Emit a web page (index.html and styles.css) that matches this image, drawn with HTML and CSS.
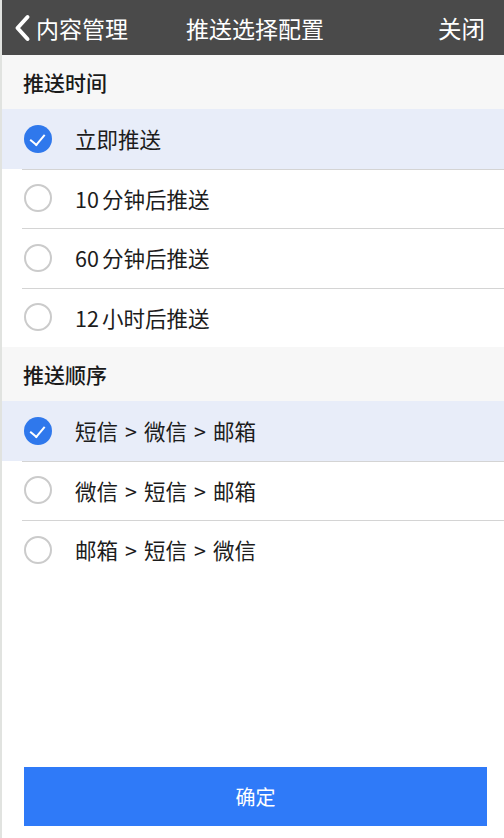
FILE: index.html
```html
<!DOCTYPE html>
<html lang="zh-CN">
<head>
    <meta charset="UTF-8">
    <meta name="viewport" content="width=device-width, initial-scale=1.0">
    <title>推送选择配置</title>
    <link rel="stylesheet" href="styles.css">
</head>
<body>
    <div class="app">
        <header class="topbar">
            <a class="back" href="#">
                <svg class="back-icon" width="18" height="28" viewBox="0 0 18 28">
                    <path d="M14.5 3 L4.5 14 L14.5 25" fill="none" stroke="#fff" stroke-width="4" stroke-linecap="round" stroke-linejoin="round"/>
                </svg>
                <span>内容管理</span>
            </a>
            <h1 class="title">推送选择配置</h1>
            <a class="close" href="#">关闭</a>
        </header>

        <div class="group-title">推送时间</div>
        <ul class="options">
            <li class="option checked"><span class="radio"></span><span class="label">立即推送</span></li>
            <li class="option"><span class="radio"></span><span class="label">10<span class="num-gap"></span>分钟后推送</span></li>
            <li class="option"><span class="radio"></span><span class="label">60<span class="num-gap"></span>分钟后推送</span></li>
            <li class="option"><span class="radio"></span><span class="label">12<span class="num-gap"></span>小时后推送</span></li>
        </ul>

        <div class="group-title">推送顺序</div>
        <ul class="options">
            <li class="option checked"><span class="radio"></span><span class="label">短信<span class="arrow">&gt;</span>微信<span class="arrow">&gt;</span>邮箱</span></li>
            <li class="option"><span class="radio"></span><span class="label">微信<span class="arrow">&gt;</span>短信<span class="arrow">&gt;</span>邮箱</span></li>
            <li class="option"><span class="radio"></span><span class="label">邮箱<span class="arrow">&gt;</span>短信<span class="arrow">&gt;</span>微信</span></li>
        </ul>

        <div class="filler"></div>

        <div class="actions">
            <button class="confirm">确定</button>
        </div>
    </div>
</body>
</html>
```

FILE: styles.css
```css
* {
    margin: 0;
    padding: 0;
    box-sizing: border-box;
}

body {
    background-color: #e1e3e0;
    font-family: "Noto Sans CJK SC", "Noto Sans", sans-serif;
    color: #1c1c1c;
}

ul {
    list-style: none;
}

a {
    text-decoration: none;
    color: #fff;
}

.app {
    margin-left: 2px;
    height: 838px;
    background-color: #fff;
    display: flex;
    flex-direction: column;
}

.topbar {
    height: 55px;
    background-color: #4a4a4a;
    color: #fff;
    display: flex;
    align-items: center;
    justify-content: space-between;
    padding: 0 19px 0 11px;
}

.back {
    display: flex;
    align-items: center;
    gap: 5px;
    font-size: 23px;
    width: 150px;
}

.back-icon {
    display: block;
}

.title {
    font-size: 23px;
    font-weight: normal;
    margin-left: 12px;
}

.close {
    font-size: 23.5px;
    width: 150px;
    text-align: right;
}

.group-title {
    height: 54px;
    line-height: 54px;
    background-color: #f7f7f7;
    padding-left: 21px;
    font-size: 21px;
    font-weight: 500;
    color: #1a1a1a;
}

.option {
    height: 59.5px;
    display: flex;
    align-items: center;
    padding-left: 22px;
    position: relative;
}

.option + .option::before {
    content: "";
    position: absolute;
    left: 20px;
    right: 0;
    top: 0;
    height: 1px;
    background-color: #d4d4d4;
}

.option.checked {
    background-color: #e8edf9;
}

.radio {
    width: 28px;
    height: 28px;
    border-radius: 50%;
    border: 2px solid #cbcbcb;
    background-color: #fff;
    flex-shrink: 0;
    position: relative;
}

.option.checked .radio {
    border: none;
    background-color: #2f78ec;
}

.option.checked .radio::after {
    content: "";
    position: absolute;
    left: 9px;
    top: 6px;
    width: 7px;
    height: 12px;
    border-right: 2px solid #fff;
    border-bottom: 2px solid #fff;
    transform: rotate(40deg);
}

.label {
    margin-left: 23px;
    font-size: 21.5px;
    color: #1c1c1c;
}

.num-gap {
    display: inline-block;
    width: 3px;
}

.arrow {
    margin: 0 7px;
}

.filler {
    flex: 1;
}

.actions {
    padding: 0 17px 12px 22px;
}

.confirm {
    width: 100%;
    height: 59px;
    border: none;
    background-color: #2f7af8;
    color: #fff;
    font-family: "Noto Sans CJK SC", "Noto Sans", sans-serif;
    font-size: 20px;
}
```
